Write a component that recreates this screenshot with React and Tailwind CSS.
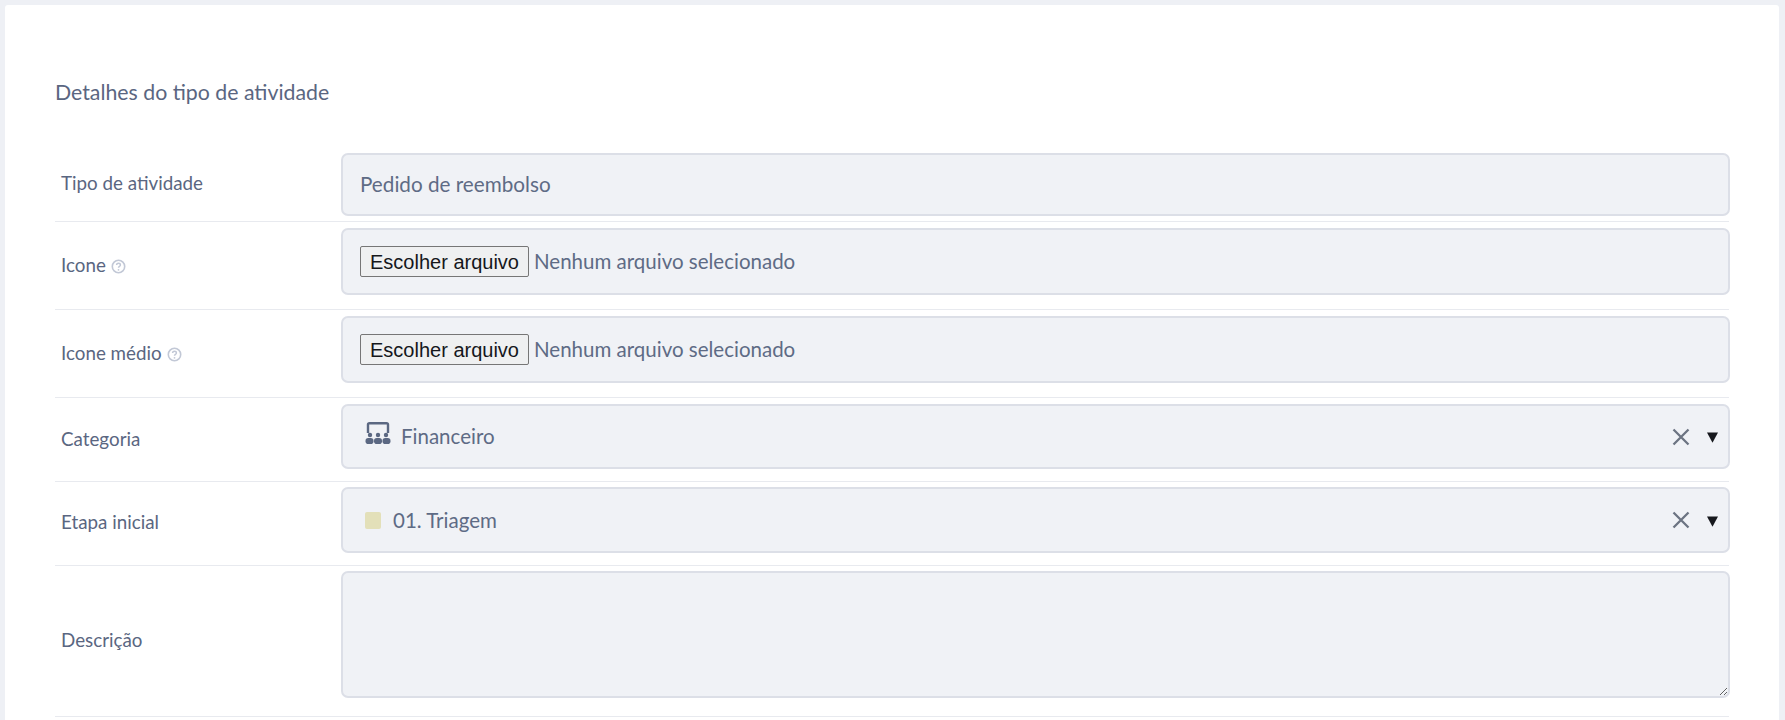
import React from "react";

const labelCls = "pl-[6px] text-[#5a6681] text-[18.8px] leading-6 flex items-center gap-[5px]";
const fieldCls = "bg-[#f0f2f6] border-2 border-[#dcdfe7] rounded-[7px] flex items-center";
const valueCls = "text-[#5e6b85] text-[20.5px] leading-6";

function Help() {
  return (
    <svg width="15" height="15" viewBox="0 0 15 15" fill="none" className="mt-[2px]">
      <circle cx="7.5" cy="7.5" r="6.2" stroke="#c2c8d6" strokeWidth="1.6" />
      <path d="M5.6 6c0-1.1.9-1.8 1.9-1.8s1.9.7 1.9 1.7c0 1.5-1.9 1.4-1.9 2.8" stroke="#c2c8d6" strokeWidth="1.5" fill="none" />
      <circle cx="7.5" cy="10.8" r=".9" fill="#c2c8d6" />
    </svg>
  );
}

function Row({ label, help, pb, pt = "pt-[6px]", lbl = "", children }) {
  return (
    <div className={`grid grid-cols-[286px_1fr] items-center border-b border-[#e8eaef] ${pt} ${pb}`}>
      <div className={`${labelCls} ${lbl}`}>
        <span>{label}</span>
        {help && <Help />}
      </div>
      <div className="-mr-px">{children}</div>
    </div>
  );
}

function FileField() {
  return (
    <div className={`${fieldCls} h-[67px] pl-[17px] gap-[5px]`}>
      <button className="h-[31px] w-[169px] bg-[#eff0f1] border border-[#767676] rounded-[2px] text-[#15171c] text-[20px] font-['Liberation_Sans',Arial,sans-serif] leading-none">
        Escolher arquivo
      </button>
      <span className={`${valueCls} mb-[2px]`}>Nenhum arquivo selecionado</span>
    </div>
  );
}

function Controls() {
  return (
    <div className="ml-auto flex items-center gap-[17px] pr-[10px]">
      <svg width="18" height="18" viewBox="0 0 18 18" fill="none">
        <path d="M1.5 1.5 16.5 16.5M16.5 1.5 1.5 16.5" stroke="#6c7482" strokeWidth="2.3" />
      </svg>
      <svg width="11" height="11" viewBox="0 0 11 11" className="mt-[2px]">
        <path d="M0 0.5H11L5.5 10.8Z" fill="#16181d" />
      </svg>
    </div>
  );
}

function PeopleIcon() {
  return (
    <svg width="26" height="22" viewBox="0 0 26 22" fill="#5b6882" className="mb-[8px]">
      <path d="M3 11V2.5C3 1.7 3.6 1.2 4.5 1.2h17c.9 0 1.5.5 1.5 1.3V11" fill="none" stroke="#5b6882" strokeWidth="2.4" />
      <circle cx="5" cy="13" r="2.2" />
      <circle cx="13" cy="13" r="2.2" />
      <circle cx="21" cy="13" r="2.2" />
      <rect x="0.5" y="16" width="8" height="6" rx="2.8" />
      <rect x="9" y="16" width="8" height="6" rx="2.8" />
      <rect x="17.5" y="16" width="8" height="6" rx="2.8" />
    </svg>
  );
}

export default function App() {
  return (
    <div className="h-[720px] overflow-hidden bg-[#eef0f5] pt-[5px] pl-[5px] pr-[6px] font-['Lato','Open_Sans',sans-serif]">
      <div className="bg-white rounded-t-[3px] h-[800px] px-[50px] pt-[73px]">
        <h2 className="text-[#5a6681] text-[21.3px] leading-7 font-normal mb-[47px]">Detalhes do tipo de atividade</h2>

        <Row label="Tipo de atividade" pb="pb-[5px]" pt="pt-0" lbl="mb-[4px]">
          <input
            readOnly
            value="Pedido de reembolso"
            className={`${fieldCls} ${valueCls} text-[20.7px] h-[63px] px-[17px] pb-[2px] w-full outline-none`}
          />
        </Row>
        <Row label="Icone" help pb="pb-[14px]" lbl="mt-[7px]">
          <FileField />
        </Row>
        <Row label="Icone médio" help pb="pb-[14px]" lbl="mt-[7px]">
          <FileField />
        </Row>
        <Row label="Categoria" pb="pb-[12px]" lbl="mt-[4px]">
          <div className={`${fieldCls} h-[65px] pl-[22px] gap-[10px]`}>
            <PeopleIcon />
            <span className={`${valueCls} mb-[2px]`}>Financeiro</span>
            <Controls />
          </div>
        </Row>
        <Row label="Etapa inicial" pb="pb-[12px]" pt="pt-[5px]" lbl="mt-[4px]">
          <div className={`${fieldCls} h-[66px] pl-[22px] gap-[12px]`}>
            <span className="w-[16px] h-[17px] bg-[#e3e0b9] rounded-[2px]" />
            <span className={valueCls}>01. Triagem</span>
            <Controls />
          </div>
        </Row>
        <Row label="Descrição" pb="pb-[18px]" pt="pt-[5px]" lbl="mt-[10px]">
          <textarea readOnly className="block bg-[#f0f2f6] border-2 border-[#dcdfe7] rounded-[7px] w-full h-[127px] outline-none" />
        </Row>
      </div>
    </div>
  );
}
